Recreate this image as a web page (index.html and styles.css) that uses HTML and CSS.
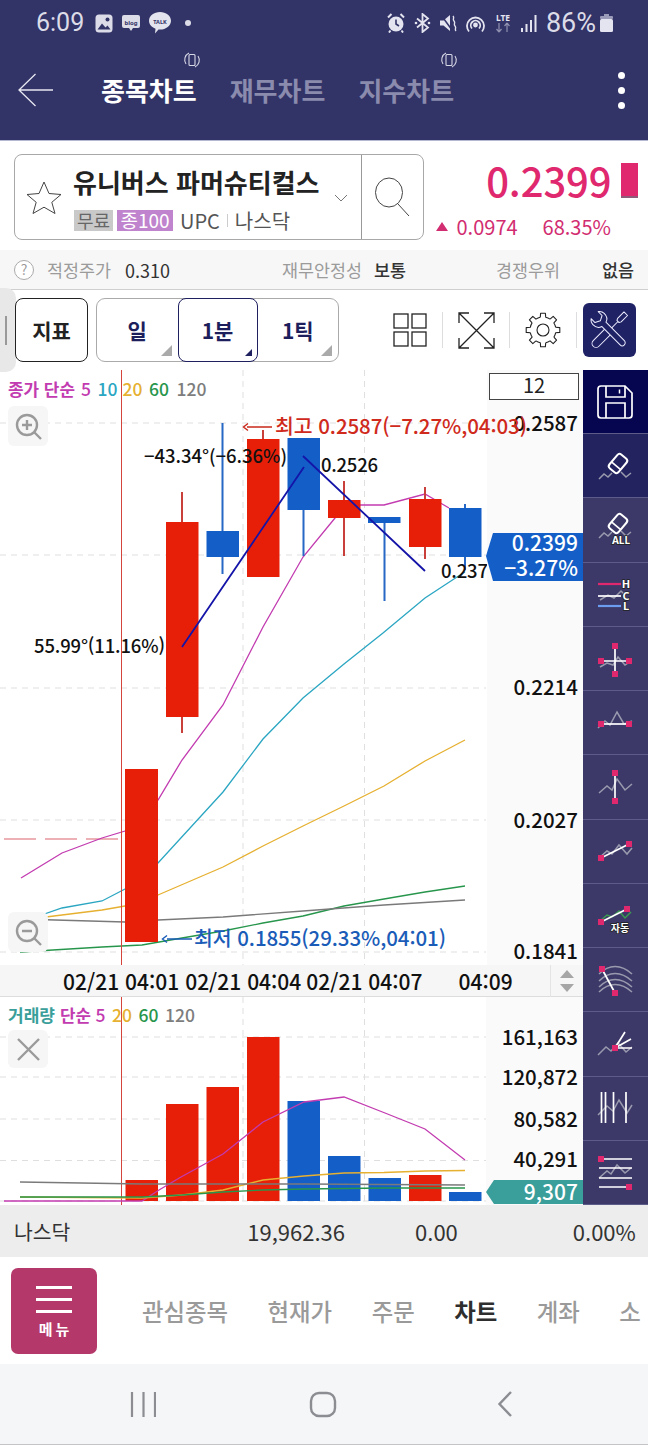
FILE: index.html
```html
<!DOCTYPE html>
<html lang="ko">
<head>
<meta charset="utf-8">
<title>종목차트</title>
<link rel="stylesheet" href="styles.css">
</head>
<body>
<div class="app">
  <header class="appbar">
    <div class="status">
      <div class="status-left">
        <span class="clock">6:09</span>
        <svg class="st" width="18" height="19" viewBox="0 0 18 19"><rect x="0.5" y="0.5" width="17" height="18" rx="3.5" fill="#dcdce8"/><circle cx="12.5" cy="5.5" r="2" fill="#323367"/><path d="M2.5 15.5l4.5-6 3.5 4 2-2 3 4z" fill="#323367"/></svg>
        <svg class="st" width="18" height="16" viewBox="0 0 18 16"><path d="M2 0h14a2 2 0 0 1 2 2v9a2 2 0 0 1-2 2h-5l-2 3-2-3H2a2 2 0 0 1-2-2V2a2 2 0 0 1 2-2z" fill="#dcdce8"/><text x="9" y="9.5" class="mini">blog</text></svg>
        <svg class="st" width="22" height="22" viewBox="0 0 22 22"><path d="M11 0c6 0 11 3.700 11 8.800s-5 8.800-11 8.800c-.5 0-1 0-1.500-.1L6 21.500l.5-4.800C2.600 15.300 0 12.300 0 8.800 0 3.700 5 0 11 0z" fill="#e4e4ee"/><text x="11" y="11.500" class="mini talk">TALK</text></svg>
        <span class="status-dot"></span>
      </div>
      <div class="status-right">
        <svg class="st" width="18" height="20" viewBox="0 0 18 20"><circle cx="9" cy="11" r="7.500" fill="#e4e4f0"/><path d="M9 6.500V11l3 2" stroke="#323367" stroke-width="1.600" fill="none"/><path d="M1 4.500L4.500 1M17 4.500L13.500 1M3.500 17.500L2 19.500M14.500 17.500L16 19.500" stroke="#e4e4f0" stroke-width="2"/></svg>
        <svg class="st" width="17" height="20" viewBox="0 0 17 20"><path d="M3 5.500l11 9-5.500 4.500V1L14 5.500l-11 9" fill="none" stroke="#e4e4f0" stroke-width="1.800"/><circle cx="2" cy="10" r="1.300" fill="#e4e4f0"/><circle cx="15" cy="10" r="1.300" fill="#e4e4f0"/></svg>
        <svg class="st" width="17" height="18" viewBox="0 0 17 18"><path d="M0 6.500h3.500L10 1v16l-6.500-5.500H0z" fill="#e4e4f0"/><path d="M1 1l11 15" stroke="#323367" stroke-width="1.500"/><path d="M13 2c2 2-1 3 1 5s-1 3 1 5-1 3 1 5" stroke="#e4e4f0" stroke-width="1.400" fill="none"/></svg>
        <svg class="st" width="19" height="19" viewBox="0 0 19 19" fill="none" stroke="#e4e4f0" stroke-width="1.800"><path d="M3 17.500A8.500 8.500 0 1 1 16 17.500"/><path d="M6 14.500a4.700 4.700 0 1 1 7 0"/><circle cx="9.500" cy="11" r="1.500" fill="#e4e4f0"/></svg>
        <svg class="st lte" width="18" height="20" viewBox="0 0 18 20"><text x="9" y="8" class="lte-txt">LTE</text><path d="M5 10v9M5 19l-2.500-3M5 19l2.500-3" stroke="#8f90b0" stroke-width="1.200" fill="none"/><path d="M13 19v-9M13 10l-2.500 3M13 10l2.500 3" stroke="#8f90b0" stroke-width="1.200" fill="none"/></svg>
        <svg class="st" width="16" height="17" viewBox="0 0 16 17"><g fill="#e4e4f0"><rect x="0" y="13" width="2" height="4"/><rect x="4.500" y="9" width="2" height="8"/><rect x="9" y="5" width="2" height="12"/><rect x="13.500" y="0" width="2" height="17"/></g></svg>
        <span class="pct">86%</span>
        <svg class="st" width="13" height="18" viewBox="0 0 13 18"><rect x="4" y="0" width="5" height="2" fill="#9a9bb8"/><rect x="0" y="2" width="13" height="3" rx="1" fill="#9a9bb8"/><rect x="0" y="5" width="13" height="13" rx="1.500" fill="#e4e4f0"/></svg>
      </div>
    </div>
    <nav class="titlebar">
      <svg class="back" width="35" height="34" viewBox="0 0 35 34" fill="none" stroke="#e8e8f2" stroke-width="1.300"><path d="M17.500 1L1 17l16.500 16M1 17h34"/></svg>
      <div class="chart-tabs">
        <span class="chart-tab on">종목차트
          <svg class="rot" width="18" height="18" viewBox="0 0 18 18" fill="none" stroke="#d8d8e6" stroke-width="1.100"><rect x="6" y="3.500" width="6" height="11" rx="1"/><path d="M3 13A7.500 7.500 0 0 1 6 2M15 5a7.500 7.500 0 0 1-3 11"/></svg>
        </span>
        <span class="chart-tab">재무차트</span>
        <span class="chart-tab">지수차트
          <svg class="rot" width="18" height="18" viewBox="0 0 18 18" fill="none" stroke="#d8d8e6" stroke-width="1.100"><rect x="6" y="3.500" width="6" height="11" rx="1"/><path d="M3 13A7.500 7.500 0 0 1 6 2M15 5a7.500 7.500 0 0 1-3 11"/></svg>
        </span>
      </div>
      <div class="kebab"><i></i><i></i><i></i></div>
    </nav>
  </header>

  <section class="stock">
    <div class="searchbox">
      <div class="stock-main">
        <svg class="star" width="36" height="33" viewBox="0 0 36 33" fill="none" stroke="#444" stroke-width="1"><path d="M18 1l5 11.500 12 1-9.200 7.800L29 32.500l-11-6.300-11 6.300 3.200-11.200L1 13.500l12-1z"/></svg>
        <div class="stock-text">
          <div class="stock-name">유니버스 파머슈티컬스</div>
          <div class="stock-tags"><span class="tag free">무료</span><span class="tag margin">종100</span><span class="mk first">UPC</span><span class="mk-sep"></span><span class="mk">나스닥</span></div>
        </div>
        <svg class="chev" width="14" height="8" viewBox="0 0 14 8" fill="none" stroke="#777" stroke-width="1"><path d="M1 1l6 6 6-6"/></svg>
      </div>
      <div class="search-btn">
        <svg width="38" height="42" viewBox="0 0 38 42" fill="none" stroke="#444" stroke-width="1"><ellipse cx="15" cy="15.500" rx="13.500" ry="14.500"/><path d="M24 27l11 12"/></svg>
      </div>
    </div>
    <div class="quote">
      <div class="price-row"><span class="price">0.2399</span><span class="price-bar"></span></div>
      <div class="change-row"><span class="tri"></span><span class="chg">0.0974</span><span class="chg-pct">68.35%</span></div>
    </div>
  </section>

  <section class="info">
    <span class="q">?</span>
    <span class="lbl l1">적정주가</span><span class="val v1">0.310</span>
    <span class="lbl l2">재무안정성</span><span class="val b v2">보통</span>
    <span class="lbl l3">경쟁우위</span><span class="val b v3">없음</span>
  </section>

  <section class="toolbar">
    <div class="handle"><i></i></div>
    <button class="tbtn">지표</button>
    <div class="periods">
      <span class="period">일</span>
      <span class="period sel">1분</span>
      <span class="period">1틱</span>
    </div>
    <svg class="ticon grid-ic" width="34" height="34" viewBox="0 0 34 34" fill="none" stroke="#222" stroke-width="1.300"><rect x="1" y="1" width="14" height="14"/><rect x="19" y="1" width="14" height="14"/><rect x="1" y="19" width="14" height="14"/><rect x="19" y="19" width="14" height="14"/></svg>
    <span class="tsep s1"></span>
    <svg class="ticon" width="37" height="37" viewBox="0 0 37 37" fill="none" stroke="#222" stroke-width="1.300"><path d="M1 1l35 35M36 1L1 36M1 11V1h10M26 1h10v10M36 26v10H26M11 36H1V26"/></svg>
    <span class="tsep s2"></span>
    <svg class="ticon" width="36" height="36" viewBox="-18 -18 36 36" fill="none" stroke="#222" stroke-width="1.100" stroke-linejoin="round">
      <path d="M-2.700 -12.700L-2.400 -16.800H2.400L2.700 -12.700A13 13 0 0 1 7.080 -10.900"/>
      <path transform="rotate(45)" d="M-2.700 -12.700L-2.400 -16.800H2.400L2.700 -12.700A13 13 0 0 1 7.080 -10.900"/>
      <path transform="rotate(90)" d="M-2.700 -12.700L-2.400 -16.800H2.400L2.700 -12.700A13 13 0 0 1 7.080 -10.900"/>
      <path transform="rotate(135)" d="M-2.700 -12.700L-2.400 -16.800H2.400L2.700 -12.700A13 13 0 0 1 7.080 -10.900"/>
      <path transform="rotate(180)" d="M-2.700 -12.700L-2.400 -16.800H2.400L2.700 -12.700A13 13 0 0 1 7.080 -10.900"/>
      <path transform="rotate(225)" d="M-2.700 -12.700L-2.400 -16.800H2.400L2.700 -12.700A13 13 0 0 1 7.080 -10.900"/>
      <path transform="rotate(270)" d="M-2.700 -12.700L-2.400 -16.800H2.400L2.700 -12.700A13 13 0 0 1 7.080 -10.900"/>
      <path transform="rotate(315)" d="M-2.700 -12.700L-2.400 -16.800H2.400L2.700 -12.700A13 13 0 0 1 7.080 -10.900"/>
      <circle r="6"/>
    </svg>
    <span class="tsep s3"></span>
    <div class="toolbtn">
      <svg width="53" height="54" viewBox="0 0 53 54" fill="#202266" stroke="#eef" stroke-width="1" stroke-linejoin="round">
        <g transform="rotate(45 26.500 27)"><path d="M24 4h5v9l-1 2h-3l-1-2z"/><path d="M26.500 15V26"/><path d="M22.500 27h8v19a4 4 0 0 1-8 0z"/></g>
        <g transform="rotate(-45 26.500 27)"><path d="M23.500 19C20 18 18.500 14.500 18.500 11.500 18.500 9 19.500 7.500 21.500 6V11.500L26.500 14 31.500 11.500V6C33.500 7.500 34.500 9 34.500 11.500 34.500 14.500 33 18 29.500 19V45A3 3 0 0 1 23.500 45Z"/></g>
      </svg>
    </div>
  </section>

  <section class="chart-area">
    <div class="chart-main">
      <svg class="price-chart" width="583" height="595" viewBox="0 370 583 595">
        <g class="grid">
          <path d="M0 423H486M0 555H486M0 688H486M0 820H486M0 952H486M243 370V965M364.500 370V965"/>
        </g>
        <path class="prev" d="M4 839H118"/>
        <polyline class="ma m5" points="21,878 62,853 102,838 125,831 158,800 182,760 223,705 263,627 303,557 335,518 344,505 384,505 425,494 449,508"/>
        <polyline class="ma m10" points="30,919 62,908 102,901 125,889 158,863 223,792 263,739 303,698 344,664 383,633 425,598 457,577 465,572"/>
        <polyline class="ma m20" points="30,919 102,910 125,906 158,895 223,867 263,846 303,826 344,806 384,786 425,761 465,740"/>
        <polyline class="ma m60" points="20,952 102,947 142,945 182,938 223,931 263,923 303,916 344,906 384,899 425,892 465,886"/>
        <polyline class="ma m120" points="20,919 125,922 158,920 223,917 303,911 384,905 465,900"/>
        <rect class="vline" x="121" y="370" width="1" height="595"/>
        <g class="wick up"><path d="M182 492V733M263 430V439M344 481V556M425 487V559"/></g>
        <g class="wick down"><path d="M222.500 423V574M303.500 438V556M384.500 517V601M465 504V570"/></g>
        <g class="body up">
          <rect x="125" y="769" width="33" height="173"/>
          <rect x="166" y="522" width="32.500" height="195"/>
          <rect x="247" y="439" width="32.500" height="138"/>
          <rect x="328" y="500" width="32.500" height="18"/>
          <rect x="409" y="499" width="32.500" height="48"/>
        </g>
        <g class="body down">
          <rect x="206.500" y="531" width="32.500" height="26"/>
          <rect x="287.500" y="438" width="32.500" height="72"/>
          <rect x="368" y="517" width="32.500" height="6"/>
          <rect x="449" y="508" width="32.500" height="49"/>
        </g>
        <path class="trend" d="M182 647L304 467M303 456L425 571"/>
        <text class="note" x="34" y="653" textLength="131">55.99°(11.16%)</text>
        <text class="note" x="144" y="463" textLength="143">−43.34°(−6.36%)</text>
        <text class="note" x="321" y="472" textLength="57">0.2526</text>
        <text class="note" x="441" y="578" textLength="47">0.237</text>
        <rect class="axis-bg" x="487" y="370" width="96" height="595"/>
        <rect class="unit-box" x="489.500" y="373.500" width="89" height="26"/>
        <text class="unit" x="534" y="393">12</text>
        <text class="ax" x="578" y="431">0.2587</text>
        <text class="ax" x="578" y="695">0.2214</text>
        <text class="ax" x="578" y="828">0.2027</text>
        <text class="ax" x="578" y="959">0.1841</text>
        <path class="hi-line" d="M247 427H272M248 423.500L243.500 427L248 430.500"/>
        <text class="hi" x="275" y="434" textLength="252">최고 0.2587(−7.27%,04:03)</text>
        <path class="lo-line" d="M167 939H192M167 935.500L162.500 939L167 942.500"/>
        <text class="lo" x="194" y="946" textLength="252">최저 0.1855(29.33%,04:01)</text>
        <polygon class="tag-blue" points="486,556 493,533 583,533 583,581 493,581"/>
        <text class="tag-t" x="578" y="551">0.2399</text>
        <text class="tag-t" x="578" y="576">−3.27%</text>
        <text class="lg-h c5" x="8" y="396" textLength="67" lengthAdjust="spacingAndGlyphs">종가 단순</text>
        <text class="lg c5" x="81" y="396">5</text>
        <text class="lg c10" x="97.500" y="396">10</text>
        <text class="lg c20" x="122.500" y="396">20</text>
        <text class="lg c60" x="149" y="396">60</text>
        <text class="lg c120" x="176.500" y="396">120</text>
        <rect class="zbtn" x="8" y="406" width="40" height="40" rx="6"/>
        <g class="zic"><circle cx="27" cy="425" r="10"/><path d="M34.500 432.500L41 439M22 425H32M27 420V430"/></g>
        <rect class="zbtn" x="8" y="912" width="40" height="40" rx="6"/>
        <g class="zic"><circle cx="27" cy="931" r="10"/><path d="M34.500 938.500L41 945M22 931H32"/></g>
      </svg>
      <div class="date-axis">
        <span class="d d1">02/21 04:01</span>
        <span class="d d2">02/21 04:04</span>
        <span class="d d3">02/21 04:07</span>
        <span class="d d4">04:09</span>
        <div class="spin"><i class="sup"></i><i class="sdn"></i></div>
      </div>
      <svg class="vol-chart" width="583" height="208" viewBox="0 997 583 208">
        <g class="grid">
          <path d="M0 1037H486M0 1077H486M0 1119H486M0 1160.500H486M0 1201H486M243 997V1205M364.500 997V1205"/>
        </g>
        <rect class="vline" x="121" y="997" width="1" height="208"/>
        <g class="body up">
          <rect x="125.500" y="1180" width="32.500" height="21"/>
          <rect x="166" y="1104" width="32.500" height="97"/>
          <rect x="206.500" y="1087" width="32.500" height="114"/>
          <rect x="247" y="1037" width="32.500" height="164"/>
          <rect x="409" y="1175" width="32.500" height="26"/>
        </g>
        <g class="body down">
          <rect x="287.500" y="1101" width="32.500" height="100"/>
          <rect x="328" y="1156" width="32.500" height="45"/>
          <rect x="368.500" y="1178" width="32.500" height="23"/>
          <rect x="449" y="1192" width="32.500" height="9"/>
        </g>
        <polyline class="ma m5" points="4,1201 102,1201 142,1201 159,1190 181,1177 223,1154 263,1122 304,1102 344,1097 385,1113 425,1129 465,1160"/>
        <polyline class="ma m20" points="20,1197 142,1198 182,1195 223,1190 263,1180 304,1176 344,1173 384,1172.500 425,1171 465,1170.500"/>
        <polyline class="ma m120" points="20,1182 142,1184 304,1184 465,1185"/>
        <polyline class="ma m60" points="20,1197 142,1197 182,1195 223,1192 263,1190 304,1189 384,1188 465,1188"/>
        <rect class="axis-bg" x="486" y="997" width="97" height="208"/>
        <text class="ax" x="578" y="1045">161,163</text>
        <text class="ax" x="578" y="1085">120,872</text>
        <text class="ax" x="578" y="1127">80,582</text>
        <text class="ax" x="578" y="1167">40,291</text>
        <polygon class="tag-teal" points="486,1192 494,1180 583,1180 583,1204 494,1204"/>
        <text class="tag-t" x="578" y="1200">9,307</text>
        <text class="lg-h cv" x="8" y="1022" textLength="47" lengthAdjust="spacingAndGlyphs">거래량</text>
        <text class="lg-h c5" x="60" y="1022" textLength="31" lengthAdjust="spacingAndGlyphs">단순</text>
        <text class="lg c5" x="95.500" y="1022">5</text>
        <text class="lg c20" x="112" y="1022">20</text>
        <text class="lg c60" x="138.500" y="1022">60</text>
        <text class="lg c120" x="165" y="1022">120</text>
        <rect class="zbtn" x="8" y="1030" width="40" height="38" rx="6"/>
        <path class="close" d="M18 1039L39 1060M39 1039L18 1060"/>
      </svg>
    </div>

    <aside class="tools">
      <div class="tool t-save"><svg width="65" height="64" viewBox="0 0 65 64" fill="none" stroke="#fff" stroke-width="1.700"><path d="M18 16H42L49 23V45A3 3 0 0 1 46 48H18A3 3 0 0 1 15 45V19A3 3 0 0 1 18 16Z"/><path d="M23 16V27H42V16M23 48V33H42V48"/><path d="M36.500 19.500V23.500" stroke-width="1.500"/></svg></div>
      <div class="tool t-act"><svg width="65" height="64" viewBox="0 0 65 64"><polyline class="zz" points="16,45 21,40 25,43 29,39"/><polyline class="zz" points="38,38 43,43 48,39"/><g transform="rotate(40 35 29.500)"><rect class="er" x="29" y="20.500" width="12" height="18" rx="3"/><path class="wl" d="M29 32.500H41"/></g></svg></div>
      <div class="tool"><svg width="65" height="64" viewBox="0 0 65 64"><polyline class="zz" points="16,40 21,35 25,38 29,34"/><polyline class="zz" points="38,33 43,38 48,34"/><g transform="rotate(40 35 25.500)"><rect class="er" x="29" y="16.500" width="12" height="18" rx="3"/><path class="wl" d="M29 28.500H41"/></g><text class="ic-t" x="38" y="46">ALL</text></svg></div>
      <div class="tool"><svg width="65" height="64" viewBox="0 0 65 64"><polyline class="zz" points="17,38 25,33 31,36 38,29 42,33"/><path class="pk-l" d="M15 22H38"/><path class="wl" d="M15 34H38"/><path class="bl-l" d="M15 44H38"/><text class="ic-t hcl" x="43" y="26">H</text><text class="ic-t hcl" x="43" y="37.500">C</text><text class="ic-t hcl" x="43" y="48">L</text></svg></div>
      <div class="tool"><svg width="65" height="64" viewBox="0 0 65 64"><polyline class="zz" points="17,40 24,36 30,38 35,30 42,38 48,34"/><path class="wl" d="M32 19V47M18 34H46"/><rect class="sq" x="29" y="16" width="6" height="6"/><rect class="sq" x="29" y="44" width="6" height="6"/><rect class="sq" x="15" y="31" width="6" height="6"/><rect class="sq" x="43" y="31" width="6" height="6"/></svg></div>
      <div class="tool"><svg width="65" height="64" viewBox="0 0 65 64"><polyline class="zz" points="15,37 22,30 27,34 34,21 41,33 49,30"/><path class="wl" d="M18 33H46"/><rect class="sq" x="15" y="30" width="6" height="6"/><rect class="sq" x="43" y="30" width="6" height="6"/></svg></div>
      <div class="tool"><svg width="65" height="64" viewBox="0 0 65 64"><polyline class="zz" points="16,38 24,31 29,35 34,24 42,35 49,29"/><path class="wl" d="M32 18V46"/><rect class="sq" x="29" y="15" width="6" height="6"/><rect class="sq" x="29" y="43" width="6" height="6"/></svg></div>
      <div class="tool"><svg width="65" height="64" viewBox="0 0 65 64"><polyline class="zz" points="16,39 24,32 29,35 36,26 44,35 49,29"/><path class="wl" d="M18 39L46 25"/><rect class="sq" x="15" y="36" width="6" height="6"/><rect class="sq" x="43" y="22" width="6" height="6"/></svg></div>
      <div class="tool"><svg width="65" height="64" viewBox="0 0 65 64"><polyline class="zz grn" points="16,38 24,31 29,33 36,27 42,34 48,28"/><path class="wl" d="M18 38L44 25"/><rect class="sq" x="15" y="35" width="6" height="6"/><rect class="sq" x="41" y="22" width="6" height="6"/><text class="ic-t ko" x="37" y="48">자동</text></svg></div>
      <div class="tool"><svg width="65" height="64" viewBox="0 0 65 64"><path class="zz" d="M16 26C26 16 38 16 49 26M16 33C26 23 38 23 49 33M16 39C26 29 38 29 49 39M16 44C26 34 38 34 49 44"/><path class="wl" d="M19 21L32 45"/><rect class="sq" x="16" y="18" width="6" height="6"/><rect class="sq" x="29" y="42" width="6" height="6"/></svg></div>
      <div class="tool"><svg width="65" height="64" viewBox="0 0 65 64"><polyline class="zz" points="15,43 23,35 28,39 35,31 43,40 49,35"/><path class="wl" d="M32 36L42 20M32 36L48 27M32 36H49"/><rect class="sq" x="29" y="33" width="6" height="6"/></svg></div>
      <div class="tool"><svg width="65" height="64" viewBox="0 0 65 64"><polyline class="zz" points="15,39 24,30 30,35 36,24 44,37 49,29"/><path class="wl" d="M18.500 16V47M22.500 16V47M30.500 16V47M43 16V47"/></svg></div>
      <div class="tool"><svg width="65" height="64" viewBox="0 0 65 64"><polyline class="zz" points="16,38 24,31 28,34 34,25 42,33 48,28"/><path class="wl" d="M18 19H49M16 28H49M16 38H49M16 47H46"/><rect class="sq" x="15" y="16" width="6" height="6"/><rect class="sq" x="43" y="44" width="6" height="6"/></svg></div>
    </aside>
  </section>

  <section class="market">
    <span class="mk-name">나스닥</span>
    <span class="mk-a">19,962.36</span>
    <span class="mk-b">0.00</span>
    <span class="mk-c">0.00%</span>
  </section>

  <section class="bottom-tabs">
    <div class="menu"><i></i><i></i><i></i><span>메뉴</span></div>
    <div class="btabs">
      <span>관심종목</span><span>현재가</span><span>주문</span><span class="on">차트</span><span>계좌</span><span>소</span>
    </div>
  </section>

  <footer class="navbar">
    <svg width="26" height="26" viewBox="0 0 26 26" stroke="#8b8d92" stroke-width="2.200"><path d="M2 1V26M13.500 1V26M25 1V26"/></svg>
    <svg width="28" height="27" viewBox="0 0 28 27" fill="none" stroke="#8b8d92" stroke-width="2.400"><rect x="2" y="2" width="24" height="23" rx="8"/></svg>
    <svg width="16" height="28" viewBox="0 0 16 28" fill="none" stroke="#8b8d92" stroke-width="2.400"><path d="M14 2L2.500 14 14 26"/></svg>
  </footer>
</div>
</body>
</html>
```
FILE: styles.css
```css
* { box-sizing: border-box; }
html, body { margin: 0; padding: 0; }
body { background: #fff; font-family: "Noto Sans CJK KR", "Noto Sans", sans-serif; color: #222; }
.app { width: 648px; height: 1445px; overflow: hidden; display: flex; flex-direction: column; }

.appbar { height: 141px; background: #323367; border-bottom: 1px solid #b4b8d0; flex: none; display: flex; flex-direction: column; }
.status { height: 46px; display: flex; justify-content: space-between; align-items: center; padding: 0 35px 0 36px; color: #dcdce8; }
.status-left, .status-right { display: flex; align-items: center; gap: 9px; }
.clock { font: 400 25px/46px Roboto, sans-serif; margin-right: 2px; }
.pct { font: 400 27px/46px Roboto, sans-serif; margin-right: -5px; }
.status-dot { width: 6px; height: 6px; border-radius: 50%; background: #dcdce8; margin-left: 5px; }
.st { display: block; flex: none; }
.mini { font: 700 6px "Noto Sans", sans-serif; fill: #323367; text-anchor: middle; }
.talk { font-size: 5.500px; }
.lte-txt { font: 700 8.500px "Noto Sans", sans-serif; fill: #e4e4f0; text-anchor: middle; }

.titlebar { flex: 1; display: flex; align-items: center; padding: 0 23px 6px 18px; }
.back { flex: none; margin-right: 48px; }
.chart-tabs { display: flex; gap: 33px; }
.chart-tab { position: relative; font-size: 26px; line-height: 34px; font-weight: 700; color: #8a8bad; white-space: nowrap; }
.chart-tab.on { color: #fff; }
.rot { position: absolute; right: -4px; top: -22px; }
.kebab { margin-left: auto; display: flex; flex-direction: column; gap: 8px; }
.kebab i { display: block; width: 7px; height: 7px; border-radius: 50%; background: #fff; }

.stock { height: 109px; flex: none; display: flex; padding: 13px 10px 0 14px; background: #fff; }
.searchbox { width: 410px; height: 86px; border: 1px solid #a8a8a8; border-radius: 8px; display: flex; flex: none; }
.stock-main { width: 347px; display: flex; align-items: flex-start; padding-left: 11px; border-right: 1px solid #999; position: relative; }
.star { flex: none; margin-top: 26px; }
.stock-text { margin-left: 11px; padding-top: 10px; }
.stock-name { font-size: 26px; line-height: 34px; font-weight: 700; color: #222; white-space: nowrap; }
.stock-tags { display: flex; align-items: center; margin-top: 11px; height: 21px; }
.tag { height: 21px; line-height: 20px; font-size: 18px; text-align: center; display: block; }
.free { width: 39px; background: #c9c9c9; color: #666; margin-left: 1px; }
.margin { width: 56px; background: #bf84cd; color: #fff; margin-left: 4px; font-size: 19px; white-space: nowrap; }
.mk { font-size: 20px; line-height: 21px; color: #555; }
.mk.first { margin-left: 7px; }
.mk-sep { width: 1px; height: 13px; background: #ccc; margin: 0 7px; }
.chev { position: absolute; left: 319px; top: 39px; }
.search-btn { flex: 1; display: flex; justify-content: center; align-items: center; padding-top: 2px; }

.quote { flex: 1; display: flex; flex-direction: column; padding-top: 6px; }
.price-row { display: flex; justify-content: flex-end; align-items: center; gap: 9px; height: 40px; }
.price { font-size: 40px; line-height: 40px; font-weight: 500; color: #e0286e; letter-spacing: -0.100px; }
.price-bar { width: 17.500px; height: 35px; background: #e0286e; border-bottom: 2px solid #8e5b78; }
.change-row { display: flex; align-items: center; justify-content: flex-end; padding-right: 27px; margin-top: 14px; height: 24px; color: #d22d70; font-size: 20px; }
.tri { width: 0; height: 0; border-left: 6.500px solid transparent; border-right: 6.500px solid transparent; border-bottom: 9px solid #d22d70; margin-right: 9px; }
.chg-pct { margin-left: 25px; }

.info { height: 40px; flex: none; background: #f7f7f7; border-bottom: 1px solid #cfcfcf; display: flex; align-items: center; padding-left: 14px; white-space: nowrap; }
.q { width: 20px; height: 20px; border-radius: 50%; border: 1px solid #aaa; background: #fff; font-size: 14px; line-height: 17px; text-align: center; color: #999; flex: none; }
.lbl { font-size: 17.400px; color: #9b9b9b; line-height: 24px; }
.val { font-size: 18px; color: #333; line-height: 24px; }
.val.b { font-size: 17.400px; font-weight: 500; }
.l1 { margin-left: 13px; }
.v1 { margin-left: 14px; }
.l2 { margin-left: 112px; }
.v2 { margin-left: 12px; }
.l3 { margin-left: 90px; }
.v3 { margin-left: 42px; }

.toolbar { height: 80px; flex: none; background: #fff; display: flex; align-items: center; padding-left: 15px; position: relative; }
.handle { position: absolute; left: 0; top: -2px; width: 16px; height: 84px; background: #e8e8e8; border-radius: 0 10px 10px 0; z-index: 2; }
.handle i { position: absolute; left: 5px; top: 28px; width: 2px; height: 29px; background: #999; }
.tbtn { width: 73px; height: 64px; background: #fff; border: 1.500px solid #222; border-radius: 8px; font: 700 21px "Noto Sans CJK KR", sans-serif; color: #222; padding: 0; position: relative; z-index: 3; flex: none; }
.periods { width: 243px; height: 64px; margin-left: 8px; border: 1px solid #aaa; border-radius: 9px; display: flex; flex: none; }
.period { flex: 1; position: relative; display: flex; align-items: center; justify-content: center; font-size: 21px; font-weight: 700; color: #1d1e5c; }
.period.sel { flex: none; width: 80px; border: 1.800px solid #1f2060; border-radius: 8px; margin: -1px 0; height: 64px; }
.period::after { content: ""; position: absolute; right: 6px; bottom: 5px; width: 0; height: 0; border-left: 11px solid transparent; border-bottom: 11px solid #aaa; }
.period.sel::after { border-left-width: 7px; border-bottom-width: 7px; border-bottom-color: #1f2060; right: 5px; bottom: 5px; }
.ticon { flex: none; display: block; }
.grid-ic { margin-left: 54px; }
.tsep { width: 1px; height: 36px; background: #ddd; flex: none; }
.s1 { margin: 0 15px; }
.s2 { margin: 0 15px 0 14px; }
.s3 { margin: 0 6px 0 15px; }
.toolbtn { width: 53px; height: 54px; background: #202266; border-radius: 6px; flex: none; }
.toolbtn svg { display: block; }

.chart-area { height: 835px; flex: none; display: flex; background: #fff; }
.chart-main { width: 583px; flex: none; display: flex; flex-direction: column; }
.price-chart, .vol-chart { display: block; flex: none; }
.grid path { fill: none; stroke: #dfdfdf; stroke-width: 1; stroke-dasharray: 6 5; }
.prev { fill: none; stroke: #d9636c; stroke-width: 1; stroke-dasharray: 32 9; }
.ma { fill: none; stroke-width: 1.300; }
.m5 { stroke: #c23bb0; }
.m10 { stroke: #2ba6c2; }
.m20 { stroke: #e6b030; }
.m60 { stroke: #27964c; }
.m120 { stroke: #7a7a7a; }
.vline { fill: #d4443c; }
.wick path { fill: none; stroke-width: 2; }
.wick.up path { stroke: #c9403a; }
.wick.down path { stroke: #2768c6; }
.body.up rect { fill: #e71f09; }
.body.down rect { fill: #145ec8; }
.trend { fill: none; stroke: #1414a8; stroke-width: 1.800; }
.note { font: 500 18.500px "Noto Sans CJK KR", sans-serif; fill: #111; }
.axis-bg { fill: #fafafa; }
.unit-box { fill: #fff; stroke: #444; stroke-width: 1; }
.unit { font: 400 20px "Noto Sans CJK KR", sans-serif; fill: #222; text-anchor: middle; }
.ax { font: 500 20.500px "Noto Sans CJK KR", sans-serif; fill: #111; text-anchor: end; }
.hi-line { fill: none; stroke: #c9281a; stroke-width: 1.400; }
.lo-line { fill: none; stroke: #1a5cb8; stroke-width: 1.400; }
.hi { font: 500 20.500px "Noto Sans CJK KR", sans-serif; fill: #cf2a1c; }
.lo { font: 500 20.500px "Noto Sans CJK KR", sans-serif; fill: #1a5cb8; }
.tag-blue { fill: #145ec8; }
.tag-teal { fill: #3a9e9a; }
.tag-t { font: 500 21px "Noto Sans CJK KR", sans-serif; fill: #fff; text-anchor: end; }
.lg { font: 500 17.500px "Noto Sans CJK KR", sans-serif; }
.lg-h { font: 700 16.500px "Noto Sans CJK KR", sans-serif; }
.c5 { fill: #c23bb0; }
.c10 { fill: #2ba6c2; }
.c20 { fill: #e6b030; }
.c60 { fill: #27964c; }
.c120 { fill: #7d7d7d; }
.cv { fill: #3a9e9a; }
.zbtn { fill: #f6f6f6; }
.zic circle, .zic path { fill: none; stroke: #9a9a9a; stroke-width: 2.400; }
.close { fill: none; stroke: #9a9a9a; stroke-width: 2.400; }

.date-axis { height: 32px; flex: none; background: #f6f6f6; border-bottom: 1px solid #ddd; display: flex; align-items: center; padding-left: 63px; position: relative; white-space: nowrap; }
.d { font-size: 21px; font-weight: 500; line-height: 30px; color: #111; }
.d2 { margin-left: 6px; }
.d3 { margin-left: 5px; }
.d4 { margin-left: 36px; }
.spin { margin-left: auto; width: 33px; height: 32px; border-left: 1px solid #e4e4e4; display: flex; flex-direction: column; align-items: center; justify-content: center; gap: 6px; }
.spin i { display: block; width: 0; height: 0; border-left: 7px solid transparent; border-right: 7px solid transparent; }
.sup { border-bottom: 8px solid #a6a6a6; }
.sdn { border-top: 8px solid #a6a6a6; }

.tools { width: 65px; flex: none; display: flex; flex-direction: column; background: #3c3968; }
.tool { flex: 1; border-bottom: 1px solid #5d5b88; display: flex; align-items: center; justify-content: center; overflow: hidden; }
.tool svg { display: block; flex: none; }
.t-save { background: #050550; }
.t-act { background: #23235f; }
.zz { fill: none; stroke: #9a9aae; stroke-width: 1.500; }
.zz.grn { stroke: #3a9a50; }
.wl { fill: none; stroke: #fff; stroke-width: 1.700; }
.er { fill: none; stroke: #fff; stroke-width: 2; }
.pk-l { fill: none; stroke: #e0286e; stroke-width: 2.200; }
.bl-l { fill: none; stroke: #6c9cf0; stroke-width: 2.200; }
.sq { fill: #e0286e; }
.ic-t { font: 700 10px "Noto Sans", sans-serif; fill: #fff; stroke: #222; stroke-width: 1.500; paint-order: stroke; text-anchor: middle; }
.hcl { font-size: 11px; }
.ic-t.ko { font: 700 10px "Noto Sans CJK KR", sans-serif; text-anchor: middle; }

.market { height: 52px; flex: none; background: #ededed; display: flex; align-items: center; padding-left: 14px; color: #333; white-space: nowrap; }
.mk-name { font-size: 20.400px; line-height: 30px; }
.mk-a, .mk-b, .mk-c { font-size: 22px; line-height: 30px; }
.mk-a { margin-left: 177px; }
.mk-b { margin-left: 70px; }
.mk-c { margin-left: 115px; }

.bottom-tabs { height: 107px; flex: none; background: #fff; display: flex; align-items: center; padding-left: 11px; }
.menu { width: 86px; height: 86px; background: #b5386b; border-radius: 7px; flex: none; display: flex; flex-direction: column; align-items: center; padding-top: 18px; }
.menu i { display: block; width: 36px; height: 3px; background: #fff; margin-bottom: 9px; }
.menu span { font-size: 15px; line-height: 16px; font-weight: 700; letter-spacing: 3px; margin-right: -3px; color: #fff; margin-top: -1px; }
.btabs { display: flex; gap: 39.500px; margin-left: 45px; }
.btabs span { font-size: 23.400px; line-height: 34px; color: #9a9a9a; font-weight: 500; flex: none; }
.btabs .on { color: #2e2e2e; font-weight: 700; }

.navbar { height: 81px; flex: none; background: #f5f6f8; border-bottom: 1px solid #c4c4c8; display: flex; align-items: center; padding: 0 0 0 130px; }
.navbar svg { display: block; flex: none; }
.navbar svg:nth-child(2) { margin-left: 153px; }
.navbar svg:nth-child(3) { margin-left: 160px; }
```
